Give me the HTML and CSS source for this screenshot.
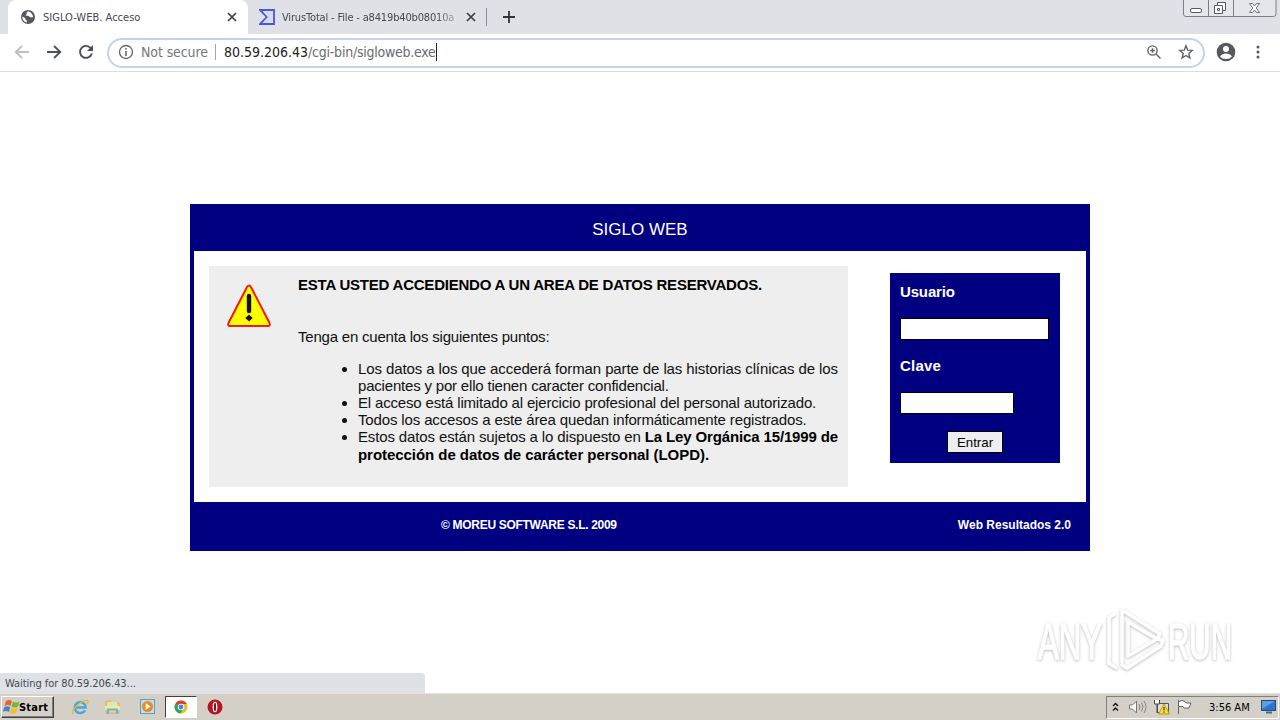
FILE: index.html
```html
<!DOCTYPE html>
<html lang="es">
<head>
<meta charset="utf-8">
<title>SIGLO-WEB. Acceso</title>
<link rel="stylesheet" href="styles.css">
</head>
<body>
<div class="screen">
  <header class="tabs">
    <div class="tab active">
      <svg class="fav" width="16" height="16" viewBox="0 0 16 16"><circle cx="8" cy="8" r="7" fill="#54585d"/><path d="M8.2 2.2 6.4 3.6l.5 1.4-1.5 1.6 3.4.5 1.3 1.2h2.9c.2-2.6-1.700-5.200-4.800-6.100zM2.300 7.400c-.2 3 1.600 5.500 4.500 6.200V11.500L5.300 10.400V9.300L2.300 7.400z" fill="#fff"/></svg>
      <span class="tab-title t1">SIGLO-WEB. Acceso</span>
      <svg class="x" width="10" height="10" viewBox="0 0 10 10"><path d="M1 1l8 8M9 1l-8 8" stroke="#3c4043" stroke-width="1.7"/></svg>
    </div>
    <div class="tab second">
      <svg class="fav" width="16" height="16" viewBox="0 0 16 16"><path d="M1 1h14v14H1l7-7z" fill="none" stroke="#4b55dc" stroke-width="1.800"/><path d="M4.500 3.500h8v9h-8L9 8z" fill="#d4d8f0"/></svg>
      <span class="tab-title t2">VirusTotal - File - a8419b40b08010a</span>
      <svg class="x" width="10" height="10" viewBox="0 0 10 10"><path d="M1 1l8 8M9 1l-8 8" stroke="#3c4043" stroke-width="1.700"/></svg>
    </div>
    <i class="tab-sep"></i>
    <svg class="plus" width="12" height="12" viewBox="0 0 12 12"><path d="M6 0v12M0 6h12" stroke="#303438" stroke-width="1.800"/></svg>
    <svg class="winctl" width="94" height="18" viewBox="0 0 94 18"><path d="M.5 0v14q0 2.500 2.500 2.500h87.500q2.500 0 2.500-2.500V0M25.500 0v16M50.500 0v16" fill="#e3e6ea" stroke="#7b8087"/><rect x="7.500" y="8.500" width="11" height="4" rx="1.500" fill="#fff" stroke="#555a65"/><path d="M34.500 2.500h8v8h-8z" fill="#fff" stroke="#555a65"/><path d="M31.500 5.500h8v8h-8zM34.500 8.500h2v2h-2z" fill="#fff" stroke="#555a65"/><path d="M66.500 3.500h3l2 2.500 2-2.500h3l-3.300 4.500 3.300 4.500h-3l-2-2.500-2 2.500h-3l3.300-4.500z" fill="#fff" stroke="#626772" stroke-width=".9"/></svg>
  </header>
  <nav class="toolbar">
    <svg class="nav" width="108" height="36" viewBox="0 0 108 36" fill="none"><path d="M29 18H16M22 12l-6.300 6 6.300 6" stroke="#bdbfc2" stroke-width="1.800"/><path d="M47 18h13M54 12l6.300 6-6.300 6" stroke="#4b4f54" stroke-width="1.800"/><path d="M91 14.500a6 6 0 1 0 .8 5" stroke="#4b4f54" stroke-width="1.900"/><path d="M93 11v6h-6z" fill="#4b4f54"/></svg>
    <div class="omnibox">
      <svg width="16" height="16" viewBox="0 0 16 16"><circle cx="8" cy="8" r="6.500" fill="none" stroke="#5f6368" stroke-width="1.300"/><path d="M8 7v5M8 4v1.600" stroke="#5f6368" stroke-width="1.500"/></svg>
      <span class="secure">Not secure</span><i class="osep"></i>
      <span class="url"><span class="host">80.59.206.43</span><span class="path">/cgi-bin/sigloweb.exe</span></span><i class="caret"></i>
      <svg class="mag" width="16" height="16" viewBox="0 0 16 16"><circle cx="6.500" cy="6.500" r="4.600" fill="none" stroke="#5f6368" stroke-width="1.400"/><path d="M10 10l4.500 4.500M4.200 6.500h4.600M6.500 4.200v4.600" stroke="#5f6368" stroke-width="1.400"/></svg>
      <svg class="star" width="16" height="16" viewBox="0 0 16 16"><path d="M8 1.800l1.700 4.300 4.600.3-3.500 3 1.100 4.600L8 11.500 4.100 14l1.100-4.600-3.500-3 4.600-.3z" fill="none" stroke="#5f6368" stroke-width="1.400"/></svg>
    </div>
    <svg class="user" width="20" height="20" viewBox="0 0 20 20"><circle cx="10" cy="10" r="9.300" fill="#55595e"/><circle cx="10" cy="7" r="3" fill="#fff"/><path d="M4 14.500q2-3 6-3t6 3Q14 17 10 17t-6-2.500z" fill="#fff"/></svg>
    <svg class="dots" width="4" height="16" viewBox="0 0 4 16" fill="#55595e"><circle cx="2" cy="3" r="1.500"/><circle cx="2" cy="8" r="1.500"/><circle cx="2" cy="13" r="1.500"/></svg>
  </nav>
  <main class="page">
    <section class="card">
      <h1 class="card-head"><span>SIGLO WEB</span></h1>
      <div class="card-body">
        <div class="notice">
          <svg class="warn" width="46" height="45" viewBox="0 0 46 45"><path d="M23 2.500Q24.500 2.500 25.500 5L43.500 40Q44.500 43 42 43H4Q1.500 43 2.500 40L20.500 5Q21.500 2.500 23 2.500z" fill="#ff0" stroke="#f01c1c" stroke-width="2"/><path d="M23 13v15" stroke="#111" stroke-width="4.400" stroke-linecap="round"/><path d="M23 31.500l3.700 3.500-3.700 3.500-3.700-3.500z" fill="#111"/></svg>
          <div class="notice-text">
            <strong class="alert">ESTA USTED ACCEDIENDO A UN AREA DE DATOS RESERVADOS.</strong>
            <p class="intro">Tenga en cuenta los siguientes puntos:</p>
            <ul>
              <li><span class="l1">Los datos a los que accederá forman parte de las historias clínicas de los</span><span class="l2">pacientes y por ello tienen caracter confidencial.</span></li>
              <li><span class="l3">El acceso está limitado al ejercicio profesional del personal autorizado.</span></li>
              <li><span class="l4">Todos los accesos a este área quedan informáticamente registrados.</span></li>
              <li><span class="l5">Estos datos están sujetos a lo dispuesto en <b>La Ley Orgánica 15/1999 de</b></span><b class="l6">protección de datos de carácter personal (LOPD).</b></li>
            </ul>
          </div>
        </div>
        <form class="login">
          <label for="u" class="lu">Usuario</label>
          <input id="u" class="in-user" type="text">
          <label for="c" class="lc">Clave</label>
          <input id="c" class="in-pass" type="password">
          <button type="button">Entrar</button>
        </form>
      </div>
      <footer class="card-foot"><span class="copy">© MOREU SOFTWARE S.L. 2009</span><span class="ver">Web Resultados 2.0</span></footer>
    </section>
    <div class="status"><span>Waiting for 80.59.206.43...</span></div>
    <svg class="watermark" width="220" height="76" viewBox="0 0 220 76">
      <g class="mark-word"><text x="8" y="55" textLength="64" lengthAdjust="spacingAndGlyphs">ANY</text><text x="138" y="55" textLength="64" lengthAdjust="spacingAndGlyphs">RUN</text></g>
      <g class="mark-logo"><path d="M84 10.500l-5 3v46l7 4M92 58V6l38 24-3 5-29-17v34l29-17 6 1-2 6-34 22-5-3"/></g>
    </svg>
  </main>
  <footer class="taskbar">
    <div class="start"><svg width="18" height="16" viewBox="0 0 18 16"><path d="M3 2q3-2 6 0L7.500 7q-3-2-6 0z" fill="#e8622c"/><path d="M10 2.500q3 2 6.500 0L15 7.500q-3 2-6.500 0z" fill="#76b43c"/><path d="M1.200 8.300q3-2 6 0L5.800 13q-3-2-6 0z" fill="#3f82cf"/><path d="M8.200 8.800q3 2 6.500 0l-1.500 5q-3 2-6.500 0z" fill="#f3bd28"/></svg><span>Start</span></div>
    <svg class="ico ie" width="18" height="18" viewBox="0 0 18 18"><path d="M14 12.300A5.500 5.500 0 1 1 14.700 9.500H5" fill="none" stroke="#45a9e0" stroke-width="2.500"/><path d="M2 16C-1 12 12 1 16.500 2.500q1.500 1-1 4" fill="none" stroke="#e5b93b" stroke-width="1.200"/></svg>
    <svg class="ico folder" width="18" height="18" viewBox="0 0 18 18"><path d="M2 3h5l1 2h7v10H2z" fill="#f1d479" stroke="#c9a646" stroke-width=".7"/><path d="M4 4h9v5H4z" fill="#d5eea8"/><path d="M1 8h15v4H1z" fill="#f8e7a4"/><path d="M4 16v-4.500h9V16" fill="none" stroke="#66b7e5" stroke-width="2.200"/></svg>
    <svg class="ico media" width="18" height="18" viewBox="0 0 18 18"><rect x="1.500" y="1.500" width="14" height="14" fill="#b9ddf2" stroke="#5a9fc7"/><circle cx="8.500" cy="8.500" r="5.500" fill="#f28a19"/><path d="M6.700 5.200v6.600l5-3.300z" fill="#fff"/></svg>
    <div class="chrome-btn"><svg width="14" height="14" viewBox="0 0 14 14"><circle cx="7" cy="7" r="6.500" fill="#efbd24"/><path d="M7 7L1.400 3.700A6.500 6.500 0 0 1 12.800 4H7z" fill="#dc3d32"/><path d="M7 7L1.400 3.700A6.500 6.500 0 0 0 6.500 13.500L9.600 8.500z" fill="#35a354"/><circle cx="7" cy="7" r="3.200" fill="#fff"/><circle cx="7" cy="7" r="2.400" fill="#4384e6"/></svg></div>
    <svg class="ico opera" width="16" height="16" viewBox="0 0 16 16"><circle cx="8" cy="8" r="7.500" fill="#b81420"/><ellipse cx="8" cy="8" rx="2.400" ry="5.300" fill="#fff"/><ellipse cx="8" cy="8" rx="1.100" ry="4.200" fill="#8c0e18"/></svg>
    <div class="tray">
      <svg class="tray-icons" width="84" height="20" viewBox="0 0 84 20"><path d="M3 9l2.500-2.500L8 9M3 13.500L5.500 11 8 13.500" fill="none" stroke="#111" stroke-width="1.400"/><path d="M19.500 8h3l4-4v12l-4-4h-3z" fill="#fff" stroke="#777"/><path d="M29 7q2 3 0 6M31.500 5.500q3 4.500 0 9M34 4q4 6 0 12" fill="none" stroke="#888"/><path d="M47.500 6.500h11v9h-11z" fill="#ddd" stroke="#555"/><path d="M44.500 3v4h5V3M47 7v9" fill="#fff" stroke="#444"/><path d="M54 7l5.500 10h-11z" fill="#ffdc27" stroke="#a88305" stroke-width=".7"/><path d="M54 10v3.500M54 14.500v1.200" stroke="#222"/><path d="M68.500 3v14M69 4.500q3-2 6 0l1 1.500h5l-2 5h-5l-1-1.500h-4" fill="#fff" stroke="#666"/></svg>
      <span class="clock">3:56 AM</span>
      <svg class="desk" width="16" height="14" viewBox="0 0 16 14"><rect x=".5" y=".5" width="14" height="10" fill="#2d76cb" stroke="#294a70"/><path d="M1 1h13L1 9z" fill="#5ba0e6"/><path d="M5 12.500h6" stroke="#466a91" stroke-width="2"/></svg>
    </div>
  </footer>
</div>
</body>
</html>
```
FILE: styles.css
```css
* { box-sizing: border-box; }
body { margin: 0; font-family: "Liberation Sans", Arial, sans-serif; }
svg { display: block; flex: none; }
span, strong, b { white-space: nowrap; }
.screen { width: 1280px; height: 720px; display: flex; flex-direction: column; overflow: hidden; background: #fff; }
.tabs { height: 34px; flex: none; display: flex; background: #dee1e6; padding-left: 8px; font-family: "DejaVu Sans Condensed", "DejaVu Sans", sans-serif; font-stretch: condensed; font-size: 11px; color: #45494d; }
.tab { display: flex; align-items: center; height: 34px; }
.active { width: 240px; background: #fff; border-radius: 8px 8px 0 0; padding: 0 11px 0 12px; }
.second { width: 238px; padding: 0 10px 0 11px; }
.fav { margin-right: 7px; }
.x { margin-left: auto; }
.t1 { letter-spacing: .02px; }
.t2 { width: 175px; letter-spacing: -.16px; -webkit-mask-image: linear-gradient(90deg, #000 88%, transparent 104%); mask-image: linear-gradient(90deg, #000 88%, transparent 104%); }
.tab-sep { width: 1px; height: 18px; background: #8b9096; margin-top: 8px; }
.plus { margin: 11px 0 0 16px; }
.winctl { margin-left: auto; margin-right: 3px; }
.toolbar { height: 38px; flex: none; display: flex; align-items: center; border-bottom: 1px solid #dcdee1; }
.nav { margin: -2px -1px 0 0; }
.omnibox { width: 1098px; height: 30px; border: 2px solid #c2d3ec; border-radius: 15px; display: flex; align-items: center; padding: 0 9px 2px 9px; }
.secure { width: 67px; margin-left: 7px; color: #73777b; letter-spacing: -.1px; }
.secure, .url { font-family: "DejaVu Sans Condensed", "DejaVu Sans", sans-serif; font-stretch: condensed; font-size: 14px; }
.osep { width: 1px; height: 16px; background: #a2a5a9; margin: 0 8px 0 7px; }
.host { color: #222; }
.path { color: #686c70; letter-spacing: -.24px; }
.caret { width: 1px; height: 18px; background: #222; }
.mag { margin-left: auto; margin-right: 16px; }
.user { margin: -2px 0 0 11px; }
.dots { margin: -2px 0 0 20px; }
.page { height: 621px; flex: none; position: relative; padding: 132px 0 0 190px; }
.card { width: 900px; height: 347px; background: #000080; padding: 0 4px; color: #fff; }
.card-head { margin: 0; height: 47px; padding-top: 5px; display: flex; align-items: center; justify-content: center; font-size: 17px; font-weight: 400; }
.card-body { height: 251px; background: #fff; padding: 15px 26px 0 15px; display: flex; justify-content: space-between; align-items: flex-start; }
.notice { width: 639px; height: 221px; background: #eee; color: #111; display: flex; padding: 10px 10px 0 17px; font-size: 15px; line-height: 17px; }
.warn { margin-top: 7px; }
.notice-text { margin-left: 26px; width: 540px; }
.alert { display: block; color: #000; letter-spacing: -.22px; }
.intro { margin: 35px 0 15px; white-space: nowrap; letter-spacing: -.21px; }
ul { margin: 0; padding-left: 60px; }
li span, li .l6 { display: block; }
.l1 { letter-spacing: -.107px; }
.l2 { letter-spacing: -.19px; }
.l3 { letter-spacing: -.167px; }
.l4 { letter-spacing: -.14px; }
.l5 { letter-spacing: -.135px; }
.l6 { padding-top: 1px; letter-spacing: -.05px; }
li b { color: #000; }
.login { width: 170px; height: 190px; margin-top: 7px; background: #000080; padding: 10px 10px 0; display: flex; flex-direction: column; align-items: flex-start; font-size: 15px; font-weight: 700; line-height: 18px; }
.login input { height: 22px; padding: 0; border: 1px solid #000; background: #fff; border-radius: 0; }
.lu { letter-spacing: -.15px; }
.lc { letter-spacing: .2px; }
.in-user { width: 149px; margin: 17px 0; }
.in-pass { width: 114px; margin: 17px 0; }
.login button { width: 56px; height: 22px; padding: 0; margin-left: 47px; background: #eee; border: 1px solid #000; border-radius: 0; font: 13.300px "Liberation Sans", sans-serif; color: #000; }
.card-foot { height: 49px; display: flex; justify-content: space-between; padding: 0 15px 3px 247px; align-items: center; font-size: 12px; font-weight: 700; }
.copy { letter-spacing: -.3px; }
.status { position: absolute; left: 0; bottom: 0; width: 425px; height: 20px; background: #dee1e6; border-radius: 0 4px 0 0; padding: 0 5px; font: 11px/21px "DejaVu Sans Condensed", sans-serif; color: #45494d; letter-spacing: -.06px; }
.watermark { position: absolute; left: 1030px; top: 532px; filter: drop-shadow(0 1px 1.500px #bdbdbd); }
.mark-word { font: 400 50px "Liberation Sans", sans-serif; fill: #fff; stroke: #fff; stroke-width: 1.500px; }
.mark-logo { fill: none; stroke: #fff; stroke-width: 3.500; stroke-linejoin: round; stroke-linecap: round; }
.taskbar { height: 27px; flex: none; background: #d4d0c8; border-top: 1px solid #e5e2dd; display: flex; align-items: center; padding-left: 1px; }
.start { width: 53px; height: 22px; border: 1px solid; border-color: #fff #404040 #404040 #fff; box-shadow: inset -1px -1px #808080; display: flex; align-items: center; padding-left: 1px; font: 700 11px "DejaVu Sans Condensed", sans-serif; letter-spacing: .2px; }
.start svg { margin-right: -2px; }
.ie { margin-left: 17px; }
.folder { margin-left: 15px; }
.media { margin-left: 17px; }
.chrome-btn { width: 32px; height: 22px; margin-left: 8px; background: #fff; border: 1px solid; border-color: #404040 #fff #fff #404040; display: flex; align-items: center; justify-content: center; }
.opera { margin-left: 10px; }
.tray { margin-left: auto; margin-right: 1px; width: 173px; height: 23px; border: 1px solid; border-color: #808080 #fff #fff #808080; display: flex; align-items: center; padding: 0 1px 0 3px; }
.clock { font: 11px "DejaVu Sans Condensed", sans-serif; margin-left: 15px; }
.desk { margin-left: auto; }
```
